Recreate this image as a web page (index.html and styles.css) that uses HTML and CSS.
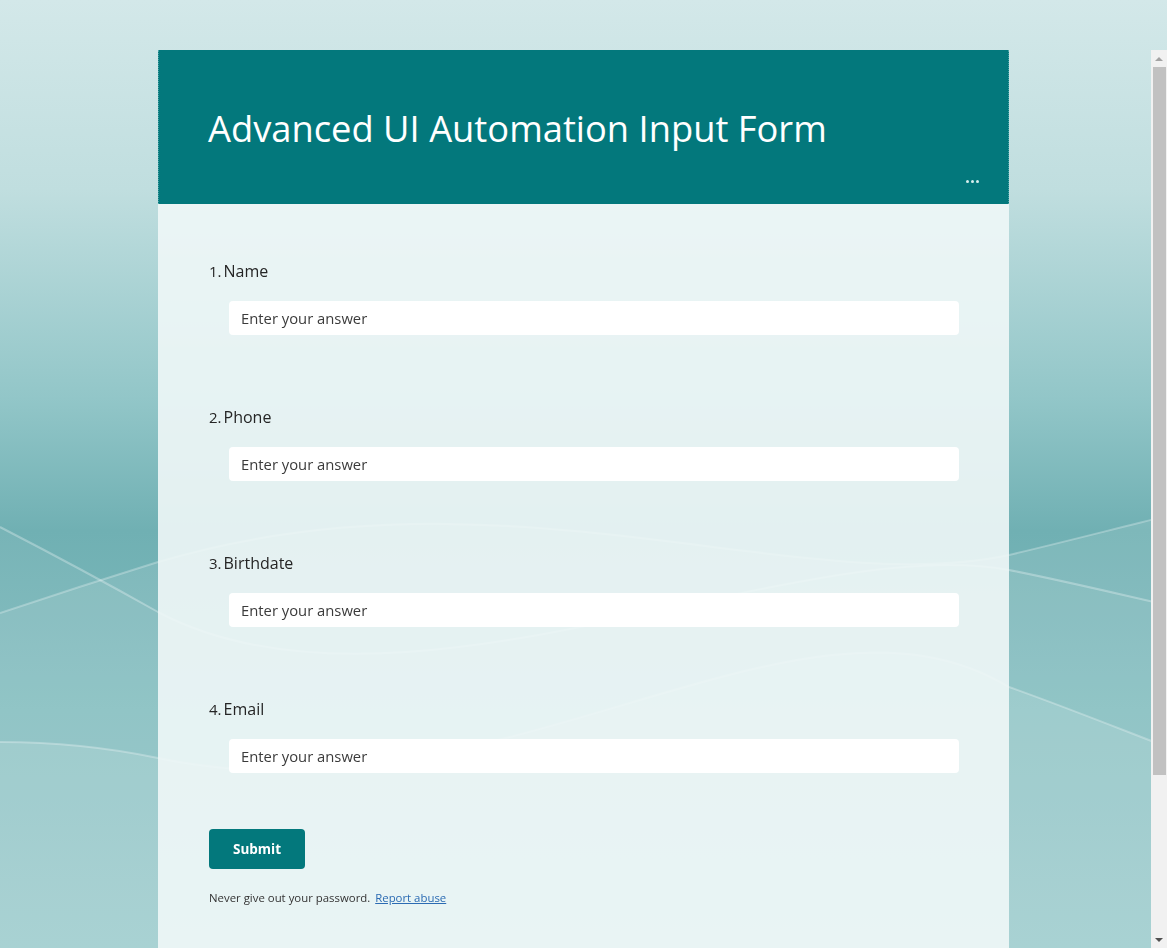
FILE: index.html
```html
<!DOCTYPE html>
<html lang="en">
<head>
<meta charset="utf-8">
<title>Advanced UI Automation Input Form</title>
<link rel="stylesheet" href="styles.css">
</head>
<body>
<svg class="backdrop" viewBox="0 0 1167 948" preserveAspectRatio="none" aria-hidden="true">
  <defs>
    <linearGradient id="bg" x1="0" y1="0" x2="0" y2="1">
      <stop offset="0" stop-color="#d3e8e9"/>
      <stop offset="0.2" stop-color="#c0dedf"/>
      <stop offset="0.42" stop-color="#92c6c8"/>
      <stop offset="0.56" stop-color="#70b0b3"/>
      <stop offset="0.75" stop-color="#7ebbbd"/>
      <stop offset="1" stop-color="#8cc3c4"/>
    </linearGradient>
  </defs>
  <rect width="1167" height="948" fill="url(#bg)"/>
  <path d="M0 613 C 60 593, 110 577, 158 562 C 500 460, 800 600, 1009 555 C 1060 543, 1110 530, 1167 516 L1167 948 L0 948 Z" fill="#ffffff" fill-opacity="0.1"/>
  <path d="M0 613 C 60 593, 110 577, 158 562 C 500 460, 800 600, 1009 555 C 1060 543, 1110 530, 1167 516" fill="none" stroke="#ffffff" stroke-opacity="0.28" stroke-width="2"/>
  <path d="M0 527 C 60 558, 110 585, 158 612 C 400 740, 800 530, 1009 570 C 1060 580, 1110 592, 1167 605 L1167 948 L0 948 Z" fill="#ffffff" fill-opacity="0.06"/>
  <path d="M0 527 C 60 558, 110 585, 158 612 C 400 740, 800 530, 1009 570 C 1060 580, 1110 592, 1167 605" fill="none" stroke="#ffffff" stroke-opacity="0.3" stroke-width="2"/>
  <path d="M0 742 C 60 742, 110 748, 158 758 C 500 830, 800 560, 1009 687 C 1060 705, 1110 725, 1167 747 L1167 948 L0 948 Z" fill="#ffffff" fill-opacity="0.12"/>
  <path d="M0 742 C 60 742, 110 748, 158 758 C 500 830, 800 560, 1009 687 C 1060 705, 1110 725, 1167 747" fill="none" stroke="#ffffff" stroke-opacity="0.28" stroke-width="2"/>
</svg>
<div class="frame">
  <div class="scroller">
    <main class="card">
      <header class="card-header">
        <h1 class="title">Advanced UI Automation Input Form</h1>
        <span class="more" aria-label="More options"><i></i><i></i><i></i></span>
      </header>
      <section class="card-body">
        <div class="questions">
          <div class="question">
            <div class="q-label"><span class="q-num">1.</span><span class="q-text">Name</span></div>
            <input class="q-input" type="text" placeholder="Enter your answer">
          </div>
          <div class="question">
            <div class="q-label"><span class="q-num">2.</span><span class="q-text">Phone</span></div>
            <input class="q-input" type="text" placeholder="Enter your answer">
          </div>
          <div class="question">
            <div class="q-label"><span class="q-num">3.</span><span class="q-text">Birthdate</span></div>
            <input class="q-input" type="text" placeholder="Enter your answer">
          </div>
          <div class="question">
            <div class="q-label"><span class="q-num">4.</span><span class="q-text">Email</span></div>
            <input class="q-input" type="text" placeholder="Enter your answer">
          </div>
        </div>
        <button class="submit" type="button">Submit</button>
        <p class="footer-note">Never give out your password. <a href="#" class="report">Report abuse</a></p>
      </section>
    </main>
  </div>
  <div class="rail" aria-hidden="true">
    <div class="rail-btn">
      <svg width="8" height="4" viewBox="0 0 8 4"><path d="M0 4 L4 0 L8 4 Z" fill="#a3a3a3"/></svg>
    </div>
    <div class="rail-track">
      <div class="rail-thumb"></div>
    </div>
    <div class="rail-btn">
      <svg width="8" height="4" viewBox="0 0 8 4"><path d="M0 0 L8 0 L4 4 Z" fill="#505050"/></svg>
    </div>
  </div>
</div>
</body>
</html>
```

FILE: styles.css
```css
html, body {
  margin: 0;
  padding: 0;
  height: 100%;
  overflow: hidden;
}
body {
  font-family: "Open Sans", "Noto Sans", "Liberation Sans", sans-serif;
  background: #a3cecf;
  position: relative;
}
.backdrop {
  position: fixed;
  left: 0;
  top: 0;
  width: 100%;
  height: 100%;
  z-index: 0;
}
.frame {
  position: relative;
  z-index: 1;
  margin-top: 50px;
  height: 898px;
  display: flex;
}
.scroller {
  flex: 1;
  height: 100%;
  overflow: hidden;
}
.rail {
  width: 16px;
  height: 100%;
  background: #f1f1f1;
  display: flex;
  flex-direction: column;
}
.rail-btn {
  height: 17px;
  display: flex;
  align-items: center;
  justify-content: center;
  flex: none;
}
.rail-track {
  flex: 1;
  display: flex;
  flex-direction: column;
  padding: 0 1px 0 2px;
}
.rail-thumb {
  height: 708px;
  background: #c1c1c1;
}
.card {
  width: 851px;
  margin-left: 158px;
  box-sizing: border-box;
}
.card-header {
  background: #03787c;
  height: 154px;
  box-sizing: border-box;
  padding: 52px 51px 0;
  position: relative;
  border-left: 1px dotted #4aa3a6;
  border-right: 1px dotted #4aa3a6;
}
.title {
  margin: 0;
  color: #ffffff;
  font-weight: 400;
  font-size: 36.3px;
  line-height: 52px;
  letter-spacing: 0;
  margin-left: -2px;
}
.more {
  position: absolute;
  right: 29px;
  top: 130px;
  display: flex;
  gap: 2px;
}
.more i {
  display: block;
  width: 3px;
  height: 3px;
  border-radius: 50%;
  background: #d7eeee;
}
.card-body {
  background: rgba(240, 247, 247, 0.9);
  padding: 55px 50px 241px 51px;
}
.questions {
  display: flex;
  flex-direction: column;
  gap: 70px;
}
.question {
  display: flex;
  flex-direction: column;
}
.q-label {
  display: flex;
  align-items: baseline;
  height: 24px;
  line-height: 24px;
  margin-bottom: 18px;
  color: #252525;
}
.q-num {
  font-size: 15px;
  margin-right: 2px;
}
.q-text {
  font-size: 16px;
}
.q-input {
  margin-left: 20px;
  height: 34px;
  box-sizing: border-box;
  border: none;
  border-radius: 4px;
  background: #ffffff;
  padding: 0 12px;
  font-family: inherit;
  font-size: 14.8px;
  color: #333333;
  outline: none;
}
.q-input::placeholder {
  color: #3b3b3b;
  opacity: 1;
}
.submit {
  margin-top: 56px;
  width: 96px;
  height: 40px;
  border: none;
  border-radius: 4px;
  background: #03787c;
  color: #ffffff;
  font-family: inherit;
  font-weight: 700;
  font-size: 13.5px;
  display: block;
  padding: 0;
}
.footer-note {
  margin: 21px 0 0;
  font-size: 11.4px;
  line-height: 16px;
  color: #333333;
}
.report {
  color: #2b6bb3;
  text-decoration: underline;
  margin-left: 2px;
}
```
